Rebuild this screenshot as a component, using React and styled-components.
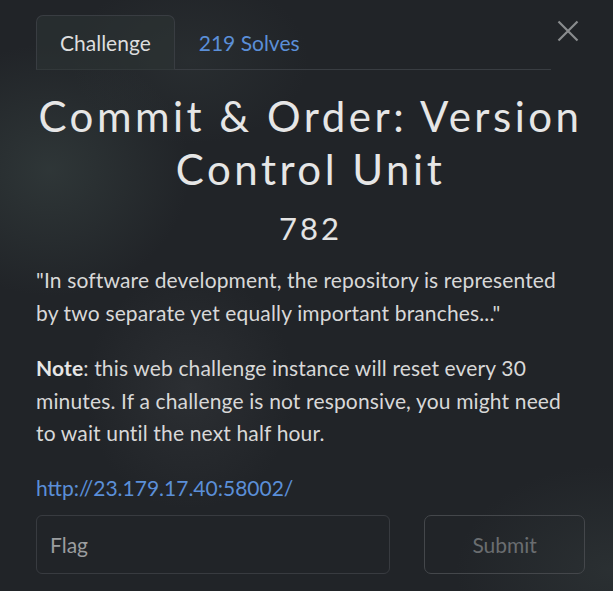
import React, { useState } from "react";
import styled, { createGlobalStyle } from "styled-components";

const GlobalStyle = createGlobalStyle`
  html, body {
    margin: 0;
    padding: 0;
    background: #212428;
  }
  body {
    font-family: Lato, "Noto Sans", sans-serif;
  }
`;

const Modal = styled.div`
  width: 613px;
  height: 591px;
  box-sizing: border-box;
  padding: 15px 28px 0 36px;
  color: #dcdcdc;
  background:
    radial-gradient(ellipse 200px 180px at 50px 170px, rgba(72, 88, 84, 0.35), transparent 70%),
    radial-gradient(ellipse 170px 120px at 190px 60px, rgba(62, 72, 72, 0.25), transparent 70%),
    radial-gradient(ellipse 150px 170px at 190px 390px, rgba(64, 67, 71, 0.35), transparent 70%),
    radial-gradient(ellipse 220px 150px at 610px 570px, rgba(62, 72, 72, 0.32), transparent 70%),
    #212428;
  position: relative;
  overflow: hidden;
`;

const TabRow = styled.div`
  display: flex;
  align-items: flex-end;
  width: 515px;
  height: 54px;
  border-bottom: 1px solid #393d42;
`;

const Tab = styled.div`
  box-sizing: border-box;
  height: 55px;
  margin-bottom: -1px;
  padding: 0 23px;
  display: flex;
  align-items: center;
  font-size: 21px;
  color: ${(p) => (p.$active ? "#dedede" : "#5b8fd8")};
  border: 1px solid ${(p) => (p.$active ? "#393d42" : "transparent")};
  border-bottom-color: transparent;
  border-radius: 7px 7px 0 0;
  background: ${(p) => (p.$active ? "rgba(46, 53, 53, 0.55)" : "transparent")};
  cursor: pointer;
`;

const Close = styled.button`
  position: absolute;
  top: 20px;
  right: 34px;
  width: 22px;
  height: 22px;
  padding: 0;
  border: none;
  background: none;
  cursor: pointer;
`;

const Title = styled.h2`
  margin: 20px 0 0;
  text-align: center;
  font-weight: 400;
  font-size: 42px;
  line-height: 53px;
  letter-spacing: 3.5px;
  color: #e6e6e6;
`;

const Points = styled.h3`
  margin: 12px 0 0;
  text-align: center;
  font-weight: 400;
  font-size: 31px;
  line-height: 40px;
  letter-spacing: 3px;
  color: #e4e4e4;
`;

const Text = styled.p`
  max-width: 540px;
  margin: ${(p) => p.$top || 0}px 0 0;
  font-size: 21px;
  line-height: 32.5px;
  letter-spacing: 0.15px;
  color: #d8d8d8;

  b {
    font-weight: 700;
    color: #e6e6e6;
  }
`;

const Link = styled.a`
  display: block;
  margin-top: 21px;
  font-size: 21px;
  line-height: 33px;
  color: #5b8fd8;
  text-decoration: none;
`;

const FlagRow = styled.form`
  display: flex;
  gap: 34px;
  margin-top: 11px;
`;

const FlagInput = styled.input`
  box-sizing: border-box;
  width: 355px;
  height: 59px;
  padding: 0 13px;
  border: 1px solid #383b40;
  border-radius: 6px;
  background: transparent;
  font-family: Lato, sans-serif;
  font-size: 21px;
  color: #dcdcdc;
  outline: none;

  &::placeholder {
    color: #9b9d9f;
  }
`;

const SubmitButton = styled.button`
  box-sizing: border-box;
  width: 161px;
  height: 59px;
  border: 1px solid #44474b;
  border-radius: 7px;
  background: transparent;
  font-family: Lato, sans-serif;
  font-size: 21px;
  color: #6a6d70;
`;

const App = () => {
  const [tab, setTab] = useState("challenge");
  const [flag, setFlag] = useState("");

  return (
    <>
      <GlobalStyle />
      <Modal>
        <TabRow>
          <Tab $active={tab === "challenge"} onClick={() => setTab("challenge")}>
            Challenge
          </Tab>
          <Tab $active={tab === "solves"} onClick={() => setTab("solves")}>
            219 Solves
          </Tab>
        </TabRow>
        <Close aria-label="Close">
          <svg width="22" height="22" viewBox="0 0 22 22">
            <path d="M1.5 1.5 L20.5 20.5 M20.5 1.5 L1.5 20.5" stroke="#8a8c8e" strokeWidth="2.2" />
          </svg>
        </Close>

        <Title>
          Commit &amp; Order: Version
          <br />
          Control Unit
        </Title>
        <Points>782</Points>

        <Text $top={16}>
          "In software development, the repository is represented by two separate yet
          equally important branches..."
        </Text>
        <Text $top={23}>
          <b>Note</b>: this web challenge instance will reset every 30 minutes. If a
          challenge is not responsive, you might need to wait until the next half hour.
        </Text>
        <Link href="#">http://23.179.17.40:58002/</Link>

        <FlagRow onSubmit={(e) => e.preventDefault()}>
          <FlagInput
            placeholder="Flag"
            value={flag}
            onChange={(e) => setFlag(e.target.value)}
          />
          <SubmitButton type="submit">Submit</SubmitButton>
        </FlagRow>
      </Modal>
    </>
  );
};

export default App;
